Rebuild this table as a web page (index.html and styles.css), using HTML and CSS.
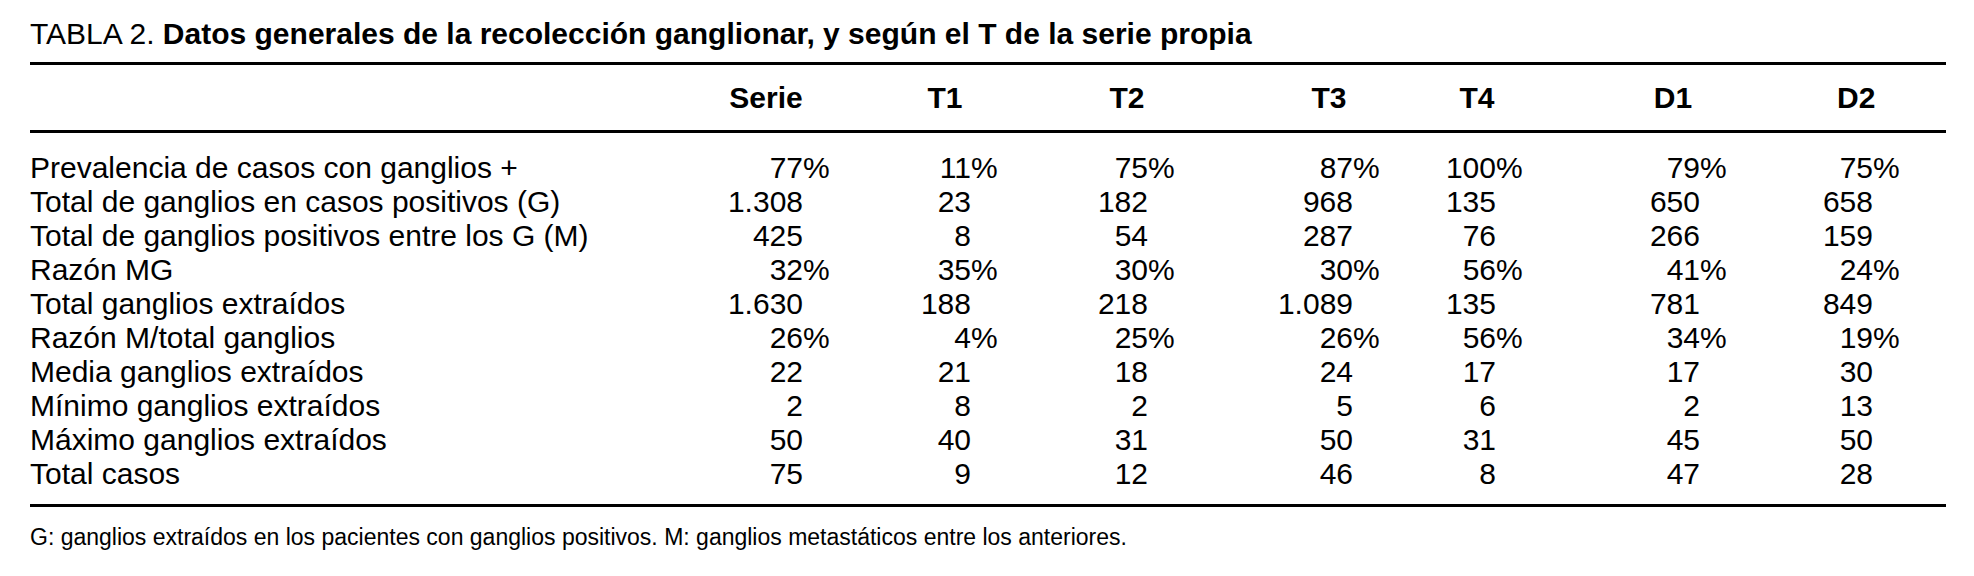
FILE: index.html
```html
<!DOCTYPE html>
<html lang="es">
<head>
<meta charset="utf-8">
<title>Tabla 2</title>
<link rel="stylesheet" href="styles.css">
</head>
<body>
<div class="page">
  <h1 class="title"><span class="title-label">TABLA 2.</span> <span class="title-text">Datos generales de la recolección ganglionar, y según el T de la serie propia</span></h1>
  <table class="data">
    <colgroup>
      <col class="c-label">
      <col class="c-serie">
      <col class="c-t1">
      <col class="c-t2">
      <col class="c-t3">
      <col class="c-t4">
      <col class="c-d1">
      <col class="c-d2">
    </colgroup>
    <thead>
      <tr>
        <th></th>
        <th class="h-serie">Serie</th>
        <th class="h-t1">T1</th>
        <th class="h-t2">T2</th>
        <th class="h-t3">T3</th>
        <th class="h-t4">T4</th>
        <th class="h-d1">D1</th>
        <th class="h-d2">D2</th>
      </tr>
    </thead>
    <tbody>
      <tr class="first"><td>Prevalencia de casos con ganglios +</td><td>77<span class="pct">%</span></td><td>11<span class="pct">%</span></td><td>75<span class="pct">%</span></td><td>87<span class="pct">%</span></td><td>100<span class="pct">%</span></td><td>79<span class="pct">%</span></td><td class="last">75<span class="pct">%</span></td></tr>
      <tr><td>Total de ganglios en casos positivos (G)</td><td>1.308</td><td>23</td><td>182</td><td>968</td><td>135</td><td>650</td><td class="last">658</td></tr>
      <tr><td>Total de ganglios positivos entre los G (M)</td><td>425</td><td>8</td><td>54</td><td>287</td><td>76</td><td>266</td><td class="last">159</td></tr>
      <tr><td>Razón MG</td><td>32<span class="pct">%</span></td><td>35<span class="pct">%</span></td><td>30<span class="pct">%</span></td><td>30<span class="pct">%</span></td><td>56<span class="pct">%</span></td><td>41<span class="pct">%</span></td><td class="last">24<span class="pct">%</span></td></tr>
      <tr><td>Total ganglios extraídos</td><td>1.630</td><td>188</td><td>218</td><td>1.089</td><td>135</td><td>781</td><td class="last">849</td></tr>
      <tr><td>Razón M/total ganglios</td><td>26<span class="pct">%</span></td><td>4<span class="pct">%</span></td><td>25<span class="pct">%</span></td><td>26<span class="pct">%</span></td><td>56<span class="pct">%</span></td><td>34<span class="pct">%</span></td><td class="last">19<span class="pct">%</span></td></tr>
      <tr><td>Media ganglios extraídos</td><td>22</td><td>21</td><td>18</td><td>24</td><td>17</td><td>17</td><td class="last">30</td></tr>
      <tr><td>Mínimo ganglios extraídos</td><td>2</td><td>8</td><td>2</td><td>5</td><td>6</td><td>2</td><td class="last">13</td></tr>
      <tr><td>Máximo ganglios extraídos</td><td>50</td><td>40</td><td>31</td><td>50</td><td>31</td><td>45</td><td class="last">50</td></tr>
      <tr class="final"><td>Total casos</td><td>75</td><td>9</td><td>12</td><td>46</td><td>8</td><td>47</td><td class="last">28</td></tr>
    </tbody>
  </table>
  <p class="note">G: ganglios extraídos en los pacientes con ganglios positivos. M: ganglios metastáticos entre los anteriores.</p>
</div>
</body>
</html>
```

FILE: styles.css
```css
html, body {
  margin: 0;
  padding: 0;
  background: #ffffff;
}

body {
  font-family: "Liberation Sans", Arial, sans-serif;
  color: #000000;
}

.page {
  padding: 14px 28px 0 30px;
}

.title {
  margin: 0;
  height: 48px;
  font-size: 30px;
  line-height: 40px;
  font-weight: normal;
  white-space: nowrap;
}

.title-text {
  font-weight: bold;
}

.data {
  width: 1916px;
  table-layout: fixed;
  border-collapse: collapse;
  border-top: 3px solid #000;
  border-bottom: 3px solid #000;
}

.c-label { width: 660px; }
.c-serie { width: 113px; }
.c-t1 { width: 168px; }
.c-t2 { width: 177px; }
.c-t3 { width: 205px; }
.c-t4 { width: 143px; }
.c-d1 { width: 204px; }
.c-d2 { width: 246px; }

thead th {
  height: 65px;
  padding: 0;
  font-size: 30px;
  font-weight: bold;
  text-align: center;
  vertical-align: middle;
  border-bottom: 3px solid #000;
}

.h-serie { padding-left: 39px; }
.h-t1 { padding-left: 116px; }
.h-t2 { padding-left: 135px; }
.h-t3 { padding-left: 157px; }
.h-t4 { padding-left: 105px; }
.h-d1 { padding-left: 150px; }
.data thead .h-d2 { padding-left: 137px; padding-right: 73px; }

tbody td {
  padding: 0;
  height: 34px;
  font-size: 30px;
  line-height: 34px;
  text-align: right;
  white-space: nowrap;
  vertical-align: middle;
}

tbody td:first-child {
  text-align: left;
}

tbody td.last {
  padding-right: 73px;
}

tbody tr.first td {
  padding-top: 18px;
}

tbody tr.final td {
  padding-bottom: 13px;
}

.pct {
  display: inline-block;
  width: 0;
  overflow: visible;
  text-align: left;
}

.note {
  margin: 15px 0 0 0;
  font-size: 23px;
  line-height: 30px;
  white-space: nowrap;
}
```
